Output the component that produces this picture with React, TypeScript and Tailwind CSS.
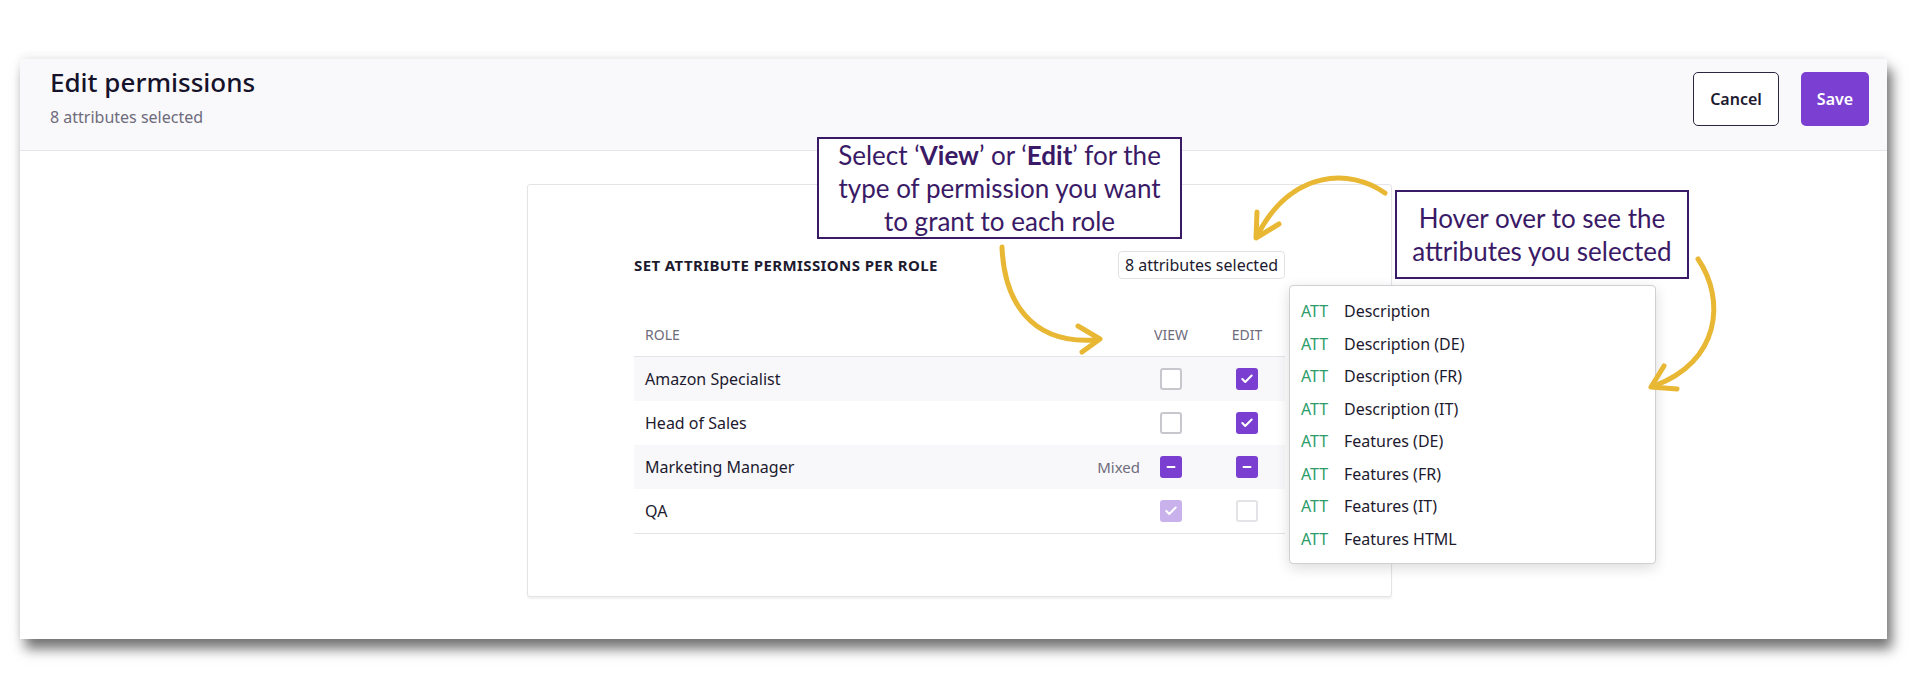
import { Check, Minus } from "lucide-react";

const roles = [
  { name: "Amazon Specialist", view: "off", edit: "on", shaded: true },
  { name: "Head of Sales", view: "off", edit: "on", shaded: false },
  { name: "Marketing Manager", view: "mixed", edit: "mixed", shaded: true, mixed: true },
  { name: "QA", view: "disabled-on", edit: "disabled-off", shaded: false },
];

const attributes = [
  "Description",
  "Description (DE)",
  "Description (FR)",
  "Description (IT)",
  "Features (DE)",
  "Features (FR)",
  "Features (IT)",
  "Features HTML",
];

function Box({ state }: { state: string }) {
  if (state === "on")
    return (
      <span className="flex h-[22px] w-[22px] items-center justify-center rounded-[3px] bg-[#7a3fd0]">
        <Check size={14} strokeWidth={3.5} className="text-white" />
      </span>
    );
  if (state === "mixed")
    return (
      <span className="flex h-[22px] w-[22px] items-center justify-center rounded-[3px] bg-[#7a3fd0]">
        <Minus size={12} strokeWidth={4} className="text-white" />
      </span>
    );
  if (state === "disabled-on")
    return (
      <span className="flex h-[22px] w-[22px] items-center justify-center rounded-[3px] bg-[#c9b2ec]">
        <Check size={14} strokeWidth={3.5} className="text-white" />
      </span>
    );
  if (state === "disabled-off")
    return <span className="block h-[22px] w-[22px] rounded-[3px] border-2 border-[#e4e4e8] bg-white" />;
  return <span className="block h-[22px] w-[22px] rounded-[3px] border-2 border-[#c7c7cd] bg-white" />;
}

export default function App() {
  return (
    <div className="relative h-[683px] w-[1920px] overflow-hidden bg-white font-['Noto_Sans',sans-serif] text-[#1d1a2f]">
      <div className="ml-[20px] mt-[59px] h-[580px] w-[1867px] bg-white shadow-[5px_10px_12px_rgba(0,0,0,0.55),0_-3px_8px_rgba(0,0,0,0.06)]">
        {/* header */}
        <div className="flex h-[92px] items-start justify-between border-b border-[#e6e6ea] bg-[#f9f9fb] pl-[30px] pr-[18px]">
          <div className="pt-[3px]">
            <h1 className="text-[26px] font-medium leading-[40px] text-[#15122a]">Edit permissions</h1>
            <p className="mt-[5px] text-[16px] leading-[20px] text-[#6e6b7b]">8 attributes selected</p>
          </div>
          <div className="flex gap-[22px] pt-[13px]">
            <button className="h-[54px] w-[86px] rounded-[5px] border-[1.5px] border-[#2c2740] bg-white text-[16px] font-semibold text-[#1d1a2f]">
              Cancel
            </button>
            <button className="h-[54px] w-[68px] rounded-[5px] bg-[#7b3fd2] text-[16px] font-semibold text-white">
              Save
            </button>
          </div>
        </div>

        {/* body */}
        <div className="pl-[507px] pt-[33px]">
          <div className="h-[413px] w-[865px] rounded-[3px] border border-[#e4e4e8] bg-white pl-[106px] pt-[66px] shadow-[0_2px_2px_rgba(0,0,0,0.06)]">
            <div className="w-[651px]">
              <div className="flex items-center justify-between">
                <span className="text-[15px] font-bold tracking-[0.4px] text-[#1d1a2f]">
                  SET ATTRIBUTE PERMISSIONS PER ROLE
                </span>
                <span className="flex h-[28px] items-center rounded-[4px] border border-[#e2e2e6] px-[6px] text-[16px] text-[#1d1a2f]">
                  8 attributes selected
                </span>
              </div>

              <div className="mt-[33px] flex h-[45px] items-center border-b border-[#e4e4e8] pl-[11px] pr-[27px] text-[14px] text-[#6e6b7b]">
                <span className="flex-1">ROLE</span>
                <span className="flex w-[22px] justify-center">VIEW</span>
                <span className="ml-[54px] flex w-[22px] justify-center">EDIT</span>
              </div>

              <div className="border-b border-[#e4e4e8]">
                {roles.map((role) => (
                  <div
                    key={role.name}
                    className={`flex h-[44px] items-center pl-[11px] pr-[27px] text-[16px] ${role.shaded ? "bg-[#f8f8fa]" : "bg-white"}`}
                  >
                    <span className="flex-1">{role.name}</span>
                    {role.mixed && <span className="mr-[20px] text-[15px] text-[#6e6b7b]">Mixed</span>}
                    <Box state={role.view} />
                    <span className="ml-[54px] flex">
                      <Box state={role.edit} />
                    </span>
                  </div>
                ))}
              </div>
            </div>
          </div>
        </div>
      </div>

      {/* attributes popover */}
      <div className="absolute left-[1289px] top-[285px] w-[367px] rounded-[4px] border border-[#cfcfd4] bg-white pb-[8px] pl-[11px] pt-[9px] shadow-[0_4px_14px_rgba(0,0,0,0.14)]">
        {attributes.map((a) => (
          <div key={a} className="flex h-[32.5px] items-center text-[16px]">
            <span className="w-[43px] text-[#2d9c69]">ATT</span>
            <span className="text-[#1d1a2f]">{a}</span>
          </div>
        ))}
      </div>

      {/* annotations */}
      <div className="absolute left-[817px] top-[137px] flex h-[102px] w-[365px] flex-col items-center justify-center border-2 border-[#3a1a66] bg-white font-['Lato',sans-serif] text-[26px] leading-[33px] text-[#3a1a66]">
        <span>
          Select ‘<b>View</b>’ or ‘<b>Edit</b>’ for the
        </span>
        <span>type of permission you want</span>
        <span>to grant to each role</span>
      </div>
      <div className="absolute left-[1395px] top-[190px] flex h-[89px] w-[294px] flex-col items-center justify-center border-2 border-[#3a1a66] bg-white font-['Lato',sans-serif] text-[26px] leading-[33px] text-[#3a1a66]">
        <span>Hover over to see the</span>
        <span>attributes you selected</span>
      </div>

      <svg
        className="pointer-events-none absolute inset-0"
        width="1920"
        height="683"
        fill="none"
        stroke="#e8b733"
        strokeWidth="5"
        strokeLinecap="round"
        strokeLinejoin="round"
      >
        <path d="M1002 247 C1004 300 1030 344 1094 340" />
        <path d="M1078 326 L1100 339 L1082 352" />
        <path d="M1385 193 C1350 168 1292 170 1258 234" />
        <path d="M1257 212 L1256 238 L1279 224" />
        <path d="M1698 259 C1726 300 1720 362 1654 386" />
        <path d="M1664 366 L1651 387 L1677 389" />
      </svg>
    </div>
  );
}
